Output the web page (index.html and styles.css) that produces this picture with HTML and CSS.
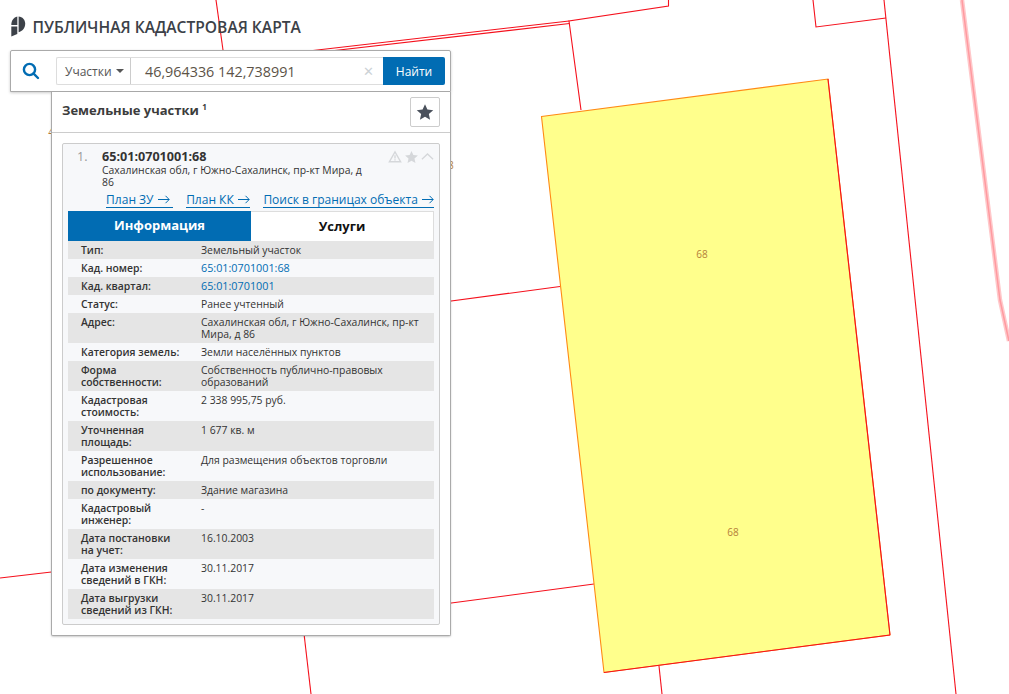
FILE: index.html
```html
<!DOCTYPE html>
<html lang="ru">
<head>
  <meta charset="UTF-8">
  <title>Публичная кадастровая карта</title>
  <link rel="stylesheet" href="styles.css">
</head>
<body>
  <svg class="map" width="1009" height="694" viewBox="0 0 1009 694">
    <polyline class="road" points="962,0 1000,300 1009,341"/>
    <polyline class="road-core" points="962,0 1000,300 1009,341"/>
    <polyline class="parcel" points="216,0 223,50"/>
    <polyline class="parcel" points="668.5,0 668.5,6 569,21 581,110"/>
    <polyline class="parcel" points="569,21 300,52"/>
    <polyline class="parcel" points="569.5,23.5 300,54.5"/>
    <polyline class="parcel" points="813,0 816,27 886,18"/>
    <polyline class="parcel" points="884,0 956,694"/>
    <polyline class="parcel" points="440,302.5 560,286.5"/>
    <polyline class="parcel" points="440,604.5 594,584"/>
    <polyline class="parcel" points="0,578 60,571"/>
    <polyline class="parcel" points="303,625 311,694"/>
    <polyline class="parcel" points="659,666 662,694"/>
    <polygon class="selected" points="541.5,116.5 828,79 890,635 604,672.5"/>
    <polyline class="parcel" points="890,635 604,672.5"/>
    <polyline class="parcel" points="828,79 890,635"/>
    <text class="label" x="702" y="258">68</text>
    <text class="label" x="733" y="536">68</text>
    <text class="label" x="448" y="169">68</text>
    <text class="label" x="54" y="136">48</text>
  </svg>

  <header class="brand">
    <svg class="brand-logo" width="15" height="21" viewBox="0 0 15 21">
      <path d="M0.3 9C0.3 4.5 2.6 1.4 6.3 0.5V9Z"/>
      <path d="M7.6 0.4C11.4 0.6 14.2 3.8 14.2 7.8C14.2 12 11.4 15.4 7.6 16.2Z"/>
      <path d="M0.3 10.6H6.3V18L0.3 20.6Z"/>
    </svg>
    <h1>ПУБЛИЧНАЯ КАДАСТРОВАЯ КАРТА</h1>
  </header>

  <div class="widget">
    <div class="search-bar">
      <svg class="search-icon" width="18" height="18" viewBox="0 0 18 18">
        <circle cx="7.5" cy="7.5" r="5.6"/>
        <line x1="11.6" y1="11.6" x2="16" y2="16"/>
      </svg>
      <div class="search-group">
        <div class="search-type">Участки <span class="caret"></span></div>
        <div class="search-input">
          <span>46,964336 142,738991</span>
          <span class="clear">&#x2715;</span>
        </div>
        <button class="search-btn">Найти</button>
      </div>
    </div>

    <div class="results">
      <div class="results-head">
        <h2>Земельные участки <sup>1</sup></h2>
        <button class="fav-btn">
          <svg width="18" height="18" viewBox="0 0 24 24"><path d="M12 1.5l3.2 7.2 7.8.8-5.9 5.2 1.7 7.7L12 18.4l-6.8 4 1.7-7.7L1 9.5l7.8-.8z"/></svg>
        </button>
      </div>

      <div class="card">
        <div class="card-head">
          <span class="card-num">1.</span>
          <div class="card-title">
            <strong>65:01:0701001:68</strong>
            <p>Сахалинская обл, г Южно-Сахалинск, пр-кт Мира, д 86</p>
          </div>
          <div class="card-icons">
            <svg width="14" height="13" viewBox="0 0 14 13"><path fill-rule="evenodd" d="M7 0.5L13.8 12.5H0.2ZM7 3.2L2.6 11H11.4ZM6.3 5.2H7.7V8.5H6.3ZM6.3 9.2H7.7V10.4H6.3Z"/></svg>
            <svg width="15" height="14" viewBox="0 0 24 24"><path d="M12 1.5l3.2 7.2 7.8.8-5.9 5.2 1.7 7.7L12 18.4l-6.8 4 1.7-7.7L1 9.5l7.8-.8z"/></svg>
            <svg class="chevron" width="13" height="9" viewBox="0 0 14 9"><polyline points="1,7.5 7,1.8 13,7.5"/></svg>
          </div>
        </div>
        <div class="card-links">
          <a class="link-wide" href="#">План ЗУ <svg class="arrow" width="12" height="9" viewBox="0 0 12 9"><path d="M0 4.5H11M7.5 0.8L11.2 4.5L7.5 8.2"/></svg></a>
          <a href="#">План КК <svg class="arrow" width="12" height="9" viewBox="0 0 12 9"><path d="M0 4.5H11M7.5 0.8L11.2 4.5L7.5 8.2"/></svg></a>
          <a href="#">Поиск в границах объекта <svg class="arrow" width="12" height="9" viewBox="0 0 12 9"><path d="M0 4.5H11M7.5 0.8L11.2 4.5L7.5 8.2"/></svg></a>
        </div>
        <div class="tabs">
          <div class="tab tab-active">Информация</div>
          <div class="tab">Услуги</div>
        </div>
        <table class="info">
          <tr><th>Тип:</th><td>Земельный участок</td></tr>
          <tr><th>Кад. номер:</th><td><a href="#">65:01:0701001:68</a></td></tr>
          <tr><th>Кад. квартал:</th><td><a href="#">65:01:0701001</a></td></tr>
          <tr><th>Статус:</th><td>Ранее учтенный</td></tr>
          <tr><th>Адрес:</th><td>Сахалинская обл, г Южно-Сахалинск, пр-кт Мира, д 86</td></tr>
          <tr><th>Категория земель:</th><td>Земли населённых пунктов</td></tr>
          <tr><th>Форма собственности:</th><td>Собственность публично-правовых образований</td></tr>
          <tr><th>Кадастровая стоимость:</th><td>2 338 995,75 руб.</td></tr>
          <tr><th>Уточненная площадь:</th><td>1 677 кв. м</td></tr>
          <tr><th>Разрешенное использование:</th><td>Для размещения объектов торговли</td></tr>
          <tr><th>по документу:</th><td>Здание магазина</td></tr>
          <tr><th>Кадастровый инженер:</th><td>-</td></tr>
          <tr><th>Дата постановки на учет:</th><td>16.10.2003</td></tr>
          <tr><th>Дата изменения сведений в ГКН:</th><td>30.11.2017</td></tr>
          <tr><th>Дата выгрузки сведений из ГКН:</th><td>30.11.2017</td></tr>
        </table>
      </div>
    </div>
  </div>
</body>
</html>
```

FILE: styles.css
```css
html, body {
  margin: 0;
  height: 694px;
  overflow: hidden;
}
body {
  position: relative;
  background: #fff;
  font-family: 'Open Sans', sans-serif;
  color: #333;
}
.map {
  position: absolute;
  top: 0;
  left: 0;
}
.parcel {
  fill: none;
  stroke: #f5101c;
  stroke-width: 1.1;
}
.road {
  fill: none;
  stroke: #ffc8ca;
  stroke-width: 4.5;
}
.road-core {
  fill: none;
  stroke: #ff9aa0;
  stroke-width: 1.5;
}
.selected {
  fill: #ffff8c;
  stroke: #ff8a14;
  stroke-width: 1.1;
}
.label {
  font-size: 10px;
  fill: #b5803a;
  text-anchor: middle;
}

.brand {
  position: relative;
  display: flex;
  align-items: center;
  gap: 7px;
  height: 20px;
  padding: 16px 0 0 10.5px;
}
.brand-logo {
  fill: #3c4148;
}
h1 {
  margin: 2px 0 0;
  font-size: 15.6px;
  font-weight: 600;
  color: #3c4148;
}

.widget {
  position: absolute;
  top: 50px;
  left: 10px;
  width: 441px;
}
.search-bar {
  box-sizing: border-box;
  display: flex;
  align-items: center;
  height: 42px;
  padding: 0 5px 0 11px;
  background: #fff;
  border: 1px solid #aaa;
  border-radius: 2px 2px 0 0;
  box-shadow: 0 1px 3px rgba(0, 0, 0, 0.2);
}
.search-icon {
  margin-right: 16px;
  fill: none;
  stroke: #016cb3;
  stroke-width: 2.4;
  stroke-linecap: round;
}
.search-group {
  display: flex;
  flex: 1;
  height: 28px;
  font-size: 12px;
}
.search-type {
  box-sizing: border-box;
  display: flex;
  align-items: center;
  gap: 4px;
  width: 75px;
  padding-left: 8px;
  border: 1px solid #ddd;
  border-right: 1px solid #ccc;
  border-radius: 2px 0 0 2px;
  color: #555;
}
.caret {
  width: 0;
  height: 0;
  border: 4px solid transparent;
  border-top-color: #555;
  border-bottom: 0;
}
.search-input {
  box-sizing: border-box;
  display: flex;
  flex: 1;
  align-items: center;
  justify-content: space-between;
  padding: 0 9px 0 14px;
  border-top: 1px solid #ddd;
  border-bottom: 1px solid #ddd;
  font-size: 14.35px;
  color: #5c5348;
}
.clear {
  font-size: 13px;
  color: #ccd2d6;
}
.search-btn {
  width: 62px;
  border: 0;
  border-radius: 0 2px 2px 0;
  background: #016cb3;
  color: #fff;
  font: 400 12px 'Open Sans', sans-serif;
}

.results {
  box-sizing: border-box;
  height: 544px;
  margin-left: 41px;
  background: #fff;
  border: 1px solid #aaa;
  border-top: 0;
  border-radius: 0 0 2px 2px;
  box-shadow: 0 1px 2px rgba(0, 0, 0, 0.2);
}
.results-head {
  display: flex;
  align-items: flex-start;
  justify-content: space-between;
  height: 35px;
  padding: 5px 10px 0;
  border-bottom: 1px solid #ccc;
}
h2 {
  margin: 4px 0 0;
  font-size: 13px;
  font-weight: 700;
  color: #3c3c3c;
}
h2 sup {
  font-size: 8px;
  line-height: 0;
}
.fav-btn {
  display: flex;
  align-items: center;
  justify-content: center;
  box-sizing: border-box;
  width: 30px;
  height: 30px;
  padding: 0;
  background: #fff;
  border: 1px solid #ccc;
  border-radius: 2px;
  fill: #4a515c;
}

.card {
  box-sizing: border-box;
  height: 482px;
  margin: 10px 10px 0;
  padding: 0 5px;
  background: #f7f8fa;
  border: 1px solid #ccc;
  border-radius: 2px;
}
.card-head {
  display: flex;
  height: 48px;
  padding-top: 6px;
  box-sizing: border-box;
}
.card-num {
  flex: none;
  width: 34px;
  padding-left: 9px;
  box-sizing: border-box;
  font-size: 12.5px;
  line-height: 14px;
  color: #999;
}
.card-title {
  flex: none;
  width: 268px;
  font-size: 10.4px;
  line-height: 12px;
}
.card-title strong {
  display: block;
  font-size: 12.6px;
  line-height: 14px;
}
.card-title p {
  margin: 0;
}
.card-icons {
  display: flex;
  align-items: center;
  gap: 2px;
  height: 13px;
  margin-left: 18px;
  fill: #d5d7da;
}
.chevron {
  fill: none;
  stroke: #d5d7da;
  stroke-width: 1.4;
}
.card-links {
  display: flex;
  justify-content: flex-end;
  gap: 13.5px;
  height: 18px;
  padding-top: 1px;
  font-size: 12px;
  line-height: 14px;
}
.card-links a {
  height: 14px;
  color: #016cb3;
  text-decoration: none;
  border-bottom: 1px solid #016cb3;
  white-space: pre;
}
.card-links .link-wide {
  padding-right: 3px;
}
.arrow {
  margin-left: 1px;
  fill: none;
  stroke: #016cb3;
  stroke-width: 1;
}
.tabs {
  display: flex;
  height: 30px;
  background: #fff;
  border: 1px solid #ddd;
  border-bottom: 0;
  box-sizing: border-box;
  font-size: 13px;
  font-weight: 700;
  line-height: 28px;
  text-align: center;
  color: #111;
}
.tab {
  flex: 1;
}
.tab-active {
  flex: none;
  width: 183px;
  height: 30px;
  margin: -1px 0 0 -1px;
  background: #016cb3;
  color: #fff;
}
.info {
  width: 366px;
  border-collapse: collapse;
  table-layout: fixed;
  font-size: 10.4px;
  line-height: 12px;
}
.info tr:nth-child(odd) {
  background: #e5e5e5;
}
.info th, .info td {
  padding: 3px 0;
  vertical-align: top;
  text-align: left;
}
.info th {
  width: 100px;
  padding: 3px 20px 3px 13px;
  font-weight: 600;
  color: #333;
}
.info a {
  font-size: 10.8px;
  color: #016cb3;
  text-decoration: none;
}
```
